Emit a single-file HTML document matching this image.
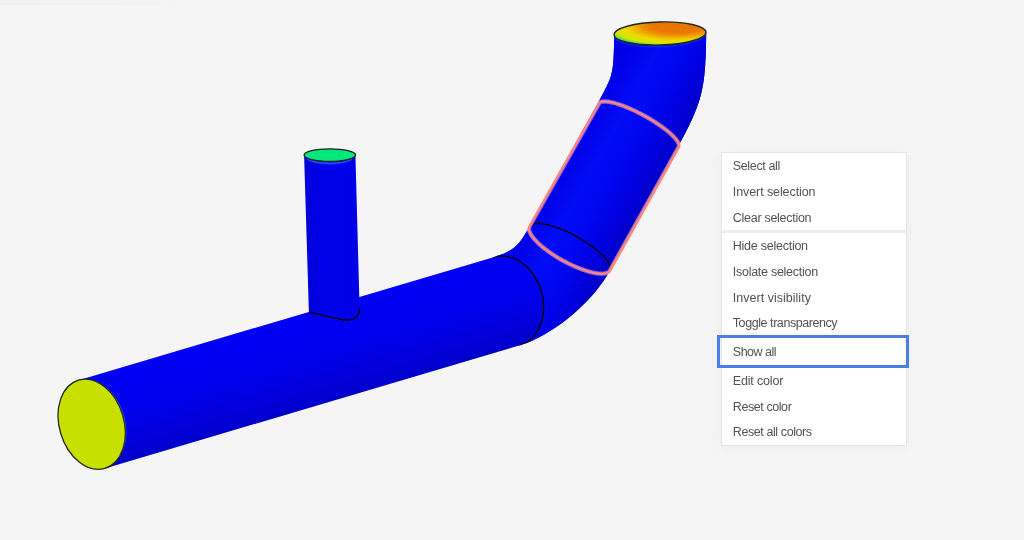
<!DOCTYPE html>
<html><head><meta charset="utf-8">
<style>
html,body{margin:0;padding:0;width:1024px;height:540px;overflow:hidden;background:#f5f5f5;}
body{position:relative;font-family:"Liberation Sans",sans-serif;}
svg{position:absolute;left:0;top:0;}
#menu{will-change:transform;position:absolute;left:721px;top:152px;width:184px;height:292px;background:#fff;border:1px solid #e4e4e4;box-shadow:0 2px 14px rgba(0,0,0,0.04);}
.it{position:absolute;left:10.8px;font-size:12.5px;line-height:14px;color:#525252;white-space:nowrap;}
.sep{position:absolute;left:0;width:184px;top:77px;height:3px;background:#eeeeee;}
#sel{position:absolute;left:717px;top:335px;width:186px;height:27px;border:3px solid #4a7de6;}
</style></head><body>
<svg width="1024" height="540" viewBox="0 0 1024 540">
<defs>
<linearGradient id="gMain" gradientUnits="userSpaceOnUse" x1="78.6" y1="380.2" x2="104.8" y2="468.4">
<stop offset="0" stop-color="#0000f6"/><stop offset="0.45" stop-color="#0000ee"/><stop offset="1" stop-color="#0000cc"/>
</linearGradient>
<radialGradient id="gTop" gradientUnits="userSpaceOnUse" cx="680" cy="25" r="80" gradientTransform="translate(680 25) scale(1 0.2857) translate(-680 -25)">
<stop offset="0" stop-color="#e87400"/><stop offset="0.35" stop-color="#ea7800"/><stop offset="0.45" stop-color="#ee8a00"/><stop offset="0.52" stop-color="#f0a000"/><stop offset="0.62" stop-color="#f0c200"/><stop offset="0.7" stop-color="#e8dc00"/><stop offset="0.85" stop-color="#d8e400"/><stop offset="0.91" stop-color="#80e040"/><stop offset="0.96" stop-color="#30e070"/><stop offset="1" stop-color="#20d0a0"/>
</radialGradient>
<linearGradient id="gElb" gradientUnits="userSpaceOnUse" x1="529.4" y1="226.7" x2="609.8" y2="270.7">
<stop offset="0" stop-color="#0000e6"/><stop offset="0.3" stop-color="#030cf6"/><stop offset="0.55" stop-color="#0006f0"/><stop offset="0.8" stop-color="#0000de"/><stop offset="1" stop-color="#0000c8"/>
</linearGradient>
<clipPath id="cpO"><path d="M78.6,380.2 L492.8,257.4 C512.9,251.4 518.4,246.8 529.4,226.7 L598.5,102.0 C613.5,74.7 613.5,74.7 614.3,34.0 L706.2,32.5 C705.6,90.1 702.7,101.8 676.5,149.5 L610.0,270.4 C592.3,302.6 552.3,335.7 519.0,345.6 L104.8,468.4 Z"/></clipPath>
<linearGradient id="gSmall" gradientUnits="userSpaceOnUse" x1="304" y1="200" x2="358" y2="200">
<stop offset="0" stop-color="#0000d8"/><stop offset="0.4" stop-color="#0000ea"/><stop offset="1" stop-color="#0000e6"/>
</linearGradient>
</defs>
<path d="M78.6,380.2 L492.8,257.4 C512.9,251.4 518.4,246.8 529.4,226.7 L598.5,102.0 C613.5,74.7 613.5,74.7 614.3,34.0 L706.2,32.5 C705.6,90.1 702.7,101.8 676.5,149.5 L610.0,270.4 C592.3,302.6 552.3,335.7 519.0,345.6 L104.8,468.4 Z" fill="url(#gMain)"/>
<path d="M304.1,155.5 L308.9,312.2 C318,314 335,318.5 344.4,320 C351,321 357.5,318.5 359.2,312 L359.6,308.5 L355.4,154.6 Z" fill="url(#gSmall)"/>
<path d="M307,159 C318,165 342,165 352,159" fill="none" stroke="#2a5cff" stroke-width="1.8" stroke-opacity="0.8"/>
<ellipse cx="329.8" cy="155.1" rx="25.7" ry="6.3" fill="#04e87a" stroke="#1a2020" stroke-width="1.3"/>
<path d="M519.0,345.6 520.9,345.2 L522.7,344.4 L524.4,343.6 L526.1,342.6 L527.8,341.6 L529.4,340.4 L530.9,339.1 L532.3,337.7 L533.7,336.2 L535.0,334.6 L536.2,332.9 L537.3,331.1 L538.4,329.3 L539.4,327.4 L540.2,325.4 L541.0,323.3 L541.7,321.2 L542.3,319.0 L542.7,316.8 L543.1,314.5 L543.4,312.2 L543.6,309.9 L543.6,307.5 L543.6,305.2 L543.5,302.8 L543.2,300.4 L542.9,298.0 L542.5,295.7 L541.9,293.3 L541.3,291.0 L540.5,288.7 L539.7,286.4 L538.8,284.2 L537.8,282.0 L536.7,279.9 L535.5,277.8 L534.2,275.8 L532.9,273.9 L531.4,272.0 L529.9,270.2 L528.4,268.6 L526.8,267.0 L525.1,265.5 L523.4,264.1 L521.6,262.7 L519.8,261.6 L517.9,260.5 L516.0,259.5 L514.1,258.6 L512.2,257.9 L510.2,257.3 L508.3,256.8 L506.3,256.4 L504.3,256.1 L502.3,256.0 L500.4,256.0 L498.4,256.1 L496.5,256.4 L494.6,256.7 L492.7,257.2 C512.9,251.4 518.4,246.8 529.4,226.7 L598.5,102.0 C613.5,74.7 613.5,74.7 614.3,34.0 L706.2,32.5 C705.6,90.1 702.7,101.8 676.5,149.5 L610.0,270.4 C592.3,302.6 552.3,335.7 519.0,345.6 Z" fill="url(#gElb)"/>
<ellipse cx="91.7" cy="424.3" rx="33.6" ry="46.2" transform="rotate(-16.6 91.7 424.3)" fill="#1a6cff" clip-path="url(#cpO)"/>
<ellipse cx="91.7" cy="424.3" rx="32.3" ry="46" transform="rotate(-16.6 91.7 424.3)" fill="#c8e000" stroke="#202820" stroke-width="1.3"/>
<ellipse cx="660" cy="34.8" rx="46" ry="11.8" transform="rotate(-1.6 660 34.8)" fill="none" stroke="#2050ff" stroke-width="1.2" stroke-opacity="0.45" clip-path="url(#cpO)"/>
<ellipse cx="660" cy="33.5" rx="46" ry="11.5" transform="rotate(-1.6 660 33.5)" fill="url(#gTop)" stroke="#1a2a20" stroke-width="1.4"/>
<path d="M519.1,345.8 L520.9,345.2 L522.7,344.4 L524.4,343.6 L526.1,342.6 L527.8,341.6 L529.4,340.4 L530.9,339.1 L532.3,337.7 L533.7,336.2 L535.0,334.6 L536.2,332.9 L537.3,331.1 L538.4,329.3 L539.4,327.4 L540.2,325.4 L541.0,323.3 L541.7,321.2 L542.3,319.0 L542.7,316.8 L543.1,314.5 L543.4,312.2 L543.6,309.9 L543.6,307.5 L543.6,305.2 L543.5,302.8 L543.2,300.4 L542.9,298.0 L542.5,295.7 L541.9,293.3 L541.3,291.0 L540.5,288.7 L539.7,286.4 L538.8,284.2 L537.8,282.0 L536.7,279.9 L535.5,277.8 L534.2,275.8 L532.9,273.9 L531.4,272.0 L529.9,270.2 L528.4,268.6 L526.8,267.0 L525.1,265.5 L523.4,264.1 L521.6,262.7 L519.8,261.6 L517.9,260.5 L516.0,259.5 L514.1,258.6 L512.2,257.9 L510.2,257.3 L508.3,256.8 L506.3,256.4 L504.3,256.1 L502.3,256.0 L500.4,256.0 L498.4,256.1 L496.5,256.4 L494.6,256.7 L492.7,257.2" fill="none" stroke="#050508" stroke-width="1.4" clip-path="url(#cpO)"/>
<path d="M308.9,312.2 C318,314 335,318.5 344.4,320 C351,321 357.5,318.5 359.2,312 L359.6,308.5" fill="none" stroke="#050508" stroke-width="1.4"/>
<path d="M529.5,226.5 L529.9,225.9 L530.4,225.4 L531.0,224.9 L531.8,224.5 L532.6,224.1 L533.5,223.9 L534.5,223.6 L535.7,223.5 L536.9,223.4 L538.2,223.4 L539.6,223.5 L541.1,223.6 L542.6,223.8 L544.3,224.1 L546.0,224.4 L547.7,224.8 L549.6,225.3 L551.4,225.8 L553.4,226.4 L555.3,227.1 L557.4,227.8 L559.4,228.5 L561.5,229.4 L563.6,230.2 L565.7,231.2 L567.8,232.1 L570.0,233.2 L572.1,234.2 L574.2,235.3 L576.3,236.4 L578.4,237.6 L580.5,238.8 L582.5,240.0 L584.5,241.3 L586.5,242.6 L588.4,243.9 L590.3,245.1 L592.1,246.5 L593.9,247.8 L595.5,249.1 L597.2,250.4 L598.7,251.7 L600.2,253.0 L601.5,254.3 L602.8,255.6 L604.0,256.8 L605.1,258.1 L606.1,259.3 L607.0,260.4 L607.8,261.6 L608.5,262.7 L609.1,263.8 L609.6,264.8 L610.0,265.8 L610.2,266.7 L610.4,267.6 L610.4,268.4 L610.4,269.2 L610.2,269.9 L609.9,270.6" fill="none" stroke="#050508" stroke-width="1.4" clip-path="url(#cpO)"/>
<path d="M599.1,103.5 L599.4,103.0 L599.9,102.6 L600.4,102.2 L601.1,101.9 L601.8,101.7 L602.7,101.6 L603.6,101.5 L604.7,101.4 L605.8,101.5 L607.1,101.6 L608.4,101.7 L609.8,102.0 L611.3,102.3 L612.9,102.6 L614.5,103.0 L616.2,103.5 L618.0,104.1 L619.8,104.7 L621.7,105.3 L623.6,106.0 L625.5,106.8 L627.5,107.6 L629.6,108.5 L631.6,109.4 L633.7,110.3 L635.8,111.3 L637.9,112.4 L640.0,113.4 L642.1,114.5 L644.2,115.7 L646.3,116.8 L648.3,118.0 L650.4,119.2 L652.3,120.4 L654.3,121.6 L656.2,122.9 L658.1,124.1 L659.9,125.4 L661.7,126.6 L663.4,127.9 L665.0,129.1 L666.6,130.3 L668.1,131.5 L669.5,132.7 L670.8,133.9 L672.0,135.1 L673.2,136.2 L674.2,137.3 L675.2,138.3 L676.0,139.4 L676.8,140.4 L677.4,141.3 L678.0,142.2 L678.4,143.1 L678.7,143.9 L678.9,144.6 L679.0,145.3 L679.0,146.0 L678.9,146.6 L678.7,147.1 L609.9,270.6 L609.5,271.2 L609.0,271.7 L608.4,272.2 L607.6,272.6 L606.8,273.0 L605.9,273.2 L604.9,273.5 L603.7,273.6 L602.5,273.7 L601.2,273.7 L599.8,273.6 L598.3,273.5 L596.8,273.3 L595.1,273.0 L593.4,272.7 L591.7,272.3 L589.8,271.8 L588.0,271.3 L586.0,270.7 L584.1,270.0 L582.0,269.3 L580.0,268.6 L577.9,267.7 L575.8,266.9 L573.7,265.9 L571.6,265.0 L569.4,263.9 L567.3,262.9 L565.2,261.8 L563.1,260.7 L561.0,259.5 L558.9,258.3 L556.9,257.1 L554.9,255.8 L552.9,254.5 L551.0,253.2 L549.1,252.0 L547.3,250.6 L545.5,249.3 L543.9,248.0 L542.2,246.7 L540.7,245.4 L539.2,244.1 L537.9,242.8 L536.6,241.5 L535.4,240.3 L534.3,239.0 L533.3,237.8 L532.4,236.7 L531.6,235.5 L530.9,234.4 L530.3,233.3 L529.8,232.3 L529.4,231.3 L529.2,230.4 L529.0,229.5 L529.0,228.7 L529.0,227.9 L529.2,227.2 L529.5,226.5 Z" fill="none" stroke="#ffd0d0" stroke-width="4.4" stroke-opacity="0.5" stroke-linejoin="round"/>
<path d="M599.1,103.5 L599.4,103.0 L599.9,102.6 L600.4,102.2 L601.1,101.9 L601.8,101.7 L602.7,101.6 L603.6,101.5 L604.7,101.4 L605.8,101.5 L607.1,101.6 L608.4,101.7 L609.8,102.0 L611.3,102.3 L612.9,102.6 L614.5,103.0 L616.2,103.5 L618.0,104.1 L619.8,104.7 L621.7,105.3 L623.6,106.0 L625.5,106.8 L627.5,107.6 L629.6,108.5 L631.6,109.4 L633.7,110.3 L635.8,111.3 L637.9,112.4 L640.0,113.4 L642.1,114.5 L644.2,115.7 L646.3,116.8 L648.3,118.0 L650.4,119.2 L652.3,120.4 L654.3,121.6 L656.2,122.9 L658.1,124.1 L659.9,125.4 L661.7,126.6 L663.4,127.9 L665.0,129.1 L666.6,130.3 L668.1,131.5 L669.5,132.7 L670.8,133.9 L672.0,135.1 L673.2,136.2 L674.2,137.3 L675.2,138.3 L676.0,139.4 L676.8,140.4 L677.4,141.3 L678.0,142.2 L678.4,143.1 L678.7,143.9 L678.9,144.6 L679.0,145.3 L679.0,146.0 L678.9,146.6 L678.7,147.1 L609.9,270.6 L609.5,271.2 L609.0,271.7 L608.4,272.2 L607.6,272.6 L606.8,273.0 L605.9,273.2 L604.9,273.5 L603.7,273.6 L602.5,273.7 L601.2,273.7 L599.8,273.6 L598.3,273.5 L596.8,273.3 L595.1,273.0 L593.4,272.7 L591.7,272.3 L589.8,271.8 L588.0,271.3 L586.0,270.7 L584.1,270.0 L582.0,269.3 L580.0,268.6 L577.9,267.7 L575.8,266.9 L573.7,265.9 L571.6,265.0 L569.4,263.9 L567.3,262.9 L565.2,261.8 L563.1,260.7 L561.0,259.5 L558.9,258.3 L556.9,257.1 L554.9,255.8 L552.9,254.5 L551.0,253.2 L549.1,252.0 L547.3,250.6 L545.5,249.3 L543.9,248.0 L542.2,246.7 L540.7,245.4 L539.2,244.1 L537.9,242.8 L536.6,241.5 L535.4,240.3 L534.3,239.0 L533.3,237.8 L532.4,236.7 L531.6,235.5 L530.9,234.4 L530.3,233.3 L529.8,232.3 L529.4,231.3 L529.2,230.4 L529.0,229.5 L529.0,228.7 L529.0,227.9 L529.2,227.2 L529.5,226.5 Z" fill="none" stroke="#f47474" stroke-width="2.5" stroke-linejoin="round"/>
<path d="M599.1,103.5 L599.4,103.0 L599.9,102.6 L600.4,102.2 L601.1,101.9 L601.8,101.7 L602.7,101.6 L603.6,101.5 L604.7,101.4 L605.8,101.5 L607.1,101.6 L608.4,101.7 L609.8,102.0 L611.3,102.3 L612.9,102.6 L614.5,103.0 L616.2,103.5 L618.0,104.1 L619.8,104.7 L621.7,105.3 L623.6,106.0 L625.5,106.8 L627.5,107.6 L629.6,108.5 L631.6,109.4 L633.7,110.3 L635.8,111.3 L637.9,112.4 L640.0,113.4 L642.1,114.5 L644.2,115.7 L646.3,116.8 L648.3,118.0 L650.4,119.2 L652.3,120.4 L654.3,121.6 L656.2,122.9 L658.1,124.1 L659.9,125.4 L661.7,126.6 L663.4,127.9 L665.0,129.1 L666.6,130.3 L668.1,131.5 L669.5,132.7 L670.8,133.9 L672.0,135.1 L673.2,136.2 L674.2,137.3 L675.2,138.3 L676.0,139.4 L676.8,140.4 L677.4,141.3 L678.0,142.2 L678.4,143.1 L678.7,143.9 L678.9,144.6 L679.0,145.3 L679.0,146.0 L678.9,146.6 L678.7,147.1 L609.9,270.6 L609.5,271.2 L609.0,271.7 L608.4,272.2 L607.6,272.6 L606.8,273.0 L605.9,273.2 L604.9,273.5 L603.7,273.6 L602.5,273.7 L601.2,273.7 L599.8,273.6 L598.3,273.5 L596.8,273.3 L595.1,273.0 L593.4,272.7 L591.7,272.3 L589.8,271.8 L588.0,271.3 L586.0,270.7 L584.1,270.0 L582.0,269.3 L580.0,268.6 L577.9,267.7 L575.8,266.9 L573.7,265.9 L571.6,265.0 L569.4,263.9 L567.3,262.9 L565.2,261.8 L563.1,260.7 L561.0,259.5 L558.9,258.3 L556.9,257.1 L554.9,255.8 L552.9,254.5 L551.0,253.2 L549.1,252.0 L547.3,250.6 L545.5,249.3 L543.9,248.0 L542.2,246.7 L540.7,245.4 L539.2,244.1 L537.9,242.8 L536.6,241.5 L535.4,240.3 L534.3,239.0 L533.3,237.8 L532.4,236.7 L531.6,235.5 L530.9,234.4 L530.3,233.3 L529.8,232.3 L529.4,231.3 L529.2,230.4 L529.0,229.5 L529.0,228.7 L529.0,227.9 L529.2,227.2 L529.5,226.5 Z" fill="none" stroke="#ffa8a8" stroke-width="0.9" stroke-opacity="0.7" stroke-linejoin="round"/>
</svg>
<div id="tl" style="position:absolute;left:0;top:0;width:180px;height:5px;background:linear-gradient(90deg,rgba(0,0,0,0.018),rgba(0,0,0,0.014) 80%,rgba(0,0,0,0))"></div>
<div id="menu">
<div class="it" style="top:6px;letter-spacing:-0.36px">Select all</div>
<div class="it" style="top:32px;letter-spacing:-0.09px">Invert selection</div>
<div class="it" style="top:58px;letter-spacing:-0.28px">Clear selection</div>
<div class="sep"></div>
<div class="it" style="top:86px;letter-spacing:-0.25px">Hide selection</div>
<div class="it" style="top:112px;letter-spacing:-0.27px">Isolate selection</div>
<div class="it" style="top:138px;letter-spacing:0.02px">Invert visibility</div>
<div class="it" style="top:163px;letter-spacing:-0.43px">Toggle transparency</div>
<div class="it" style="top:192px;letter-spacing:-0.49px">Show all</div>
<div class="it" style="top:221px;letter-spacing:-0.17px">Edit color</div>
<div class="it" style="top:247px;letter-spacing:-0.42px">Reset color</div>
<div class="it" style="top:272px;letter-spacing:-0.41px">Reset all colors</div>
</div>
<div id="sel"></div>
</body></html>
